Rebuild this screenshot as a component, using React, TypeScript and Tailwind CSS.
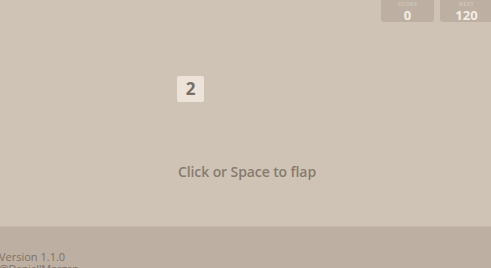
import React from 'react';

function ScoreBox({ label, value }: { label: string; value: number }) {
  return (
    <div className="flex h-[22px] w-[53px] shrink-0 flex-col items-center rounded-b-[3px] bg-[#bdb0a2] pt-[1px]">
      <span className="text-[6px] leading-[7px] font-bold uppercase tracking-wide text-[#cfc3b6]">{label}</span>
      <span className="mt-[1px] text-[13px] leading-[12px] font-bold text-[#f4ede5]">{value}</span>
    </div>
  );
}

export default function App() {
  return (
    <div
      className="flex h-[268px] w-[491px] flex-col overflow-hidden bg-[#cfc3b6]"
      style={{ fontFamily: '"Open Sans", "Noto Sans", sans-serif' }}
    >
      <div className="relative h-[226px] shrink-0">
        {/* scores */}
        <div className="absolute right-[-2px] top-0 flex gap-[6px]">
          <ScoreBox label="Score" value={0} />
          <ScoreBox label="Best" value={120} />
        </div>

        {/* bird tile */}
        <div className="absolute left-[177px] top-[76px] flex h-[26px] w-[27px] items-center justify-center rounded-[2px] bg-[#ede3d8] text-[17px] font-bold text-[#776e65]">
          2
        </div>

        <div className="flex justify-center pt-[161px] pl-[3px] text-[14px] font-semibold tracking-[-0.1px] text-[#877b6f]">
          Click or Space to flap
        </div>
      </div>

      <div className="flex-1 border-t border-[#c6b9ab] bg-[#bdb0a2] pt-[24px] text-[11px] leading-[12px] text-[#7d7165]">
        <div className="-ml-[1px]">Version 1.1.0</div>
        <div className="-ml-[1px] tracking-[-0.4px]">@DanielJMorgan</div>
      </div>
    </div>
  );
}
